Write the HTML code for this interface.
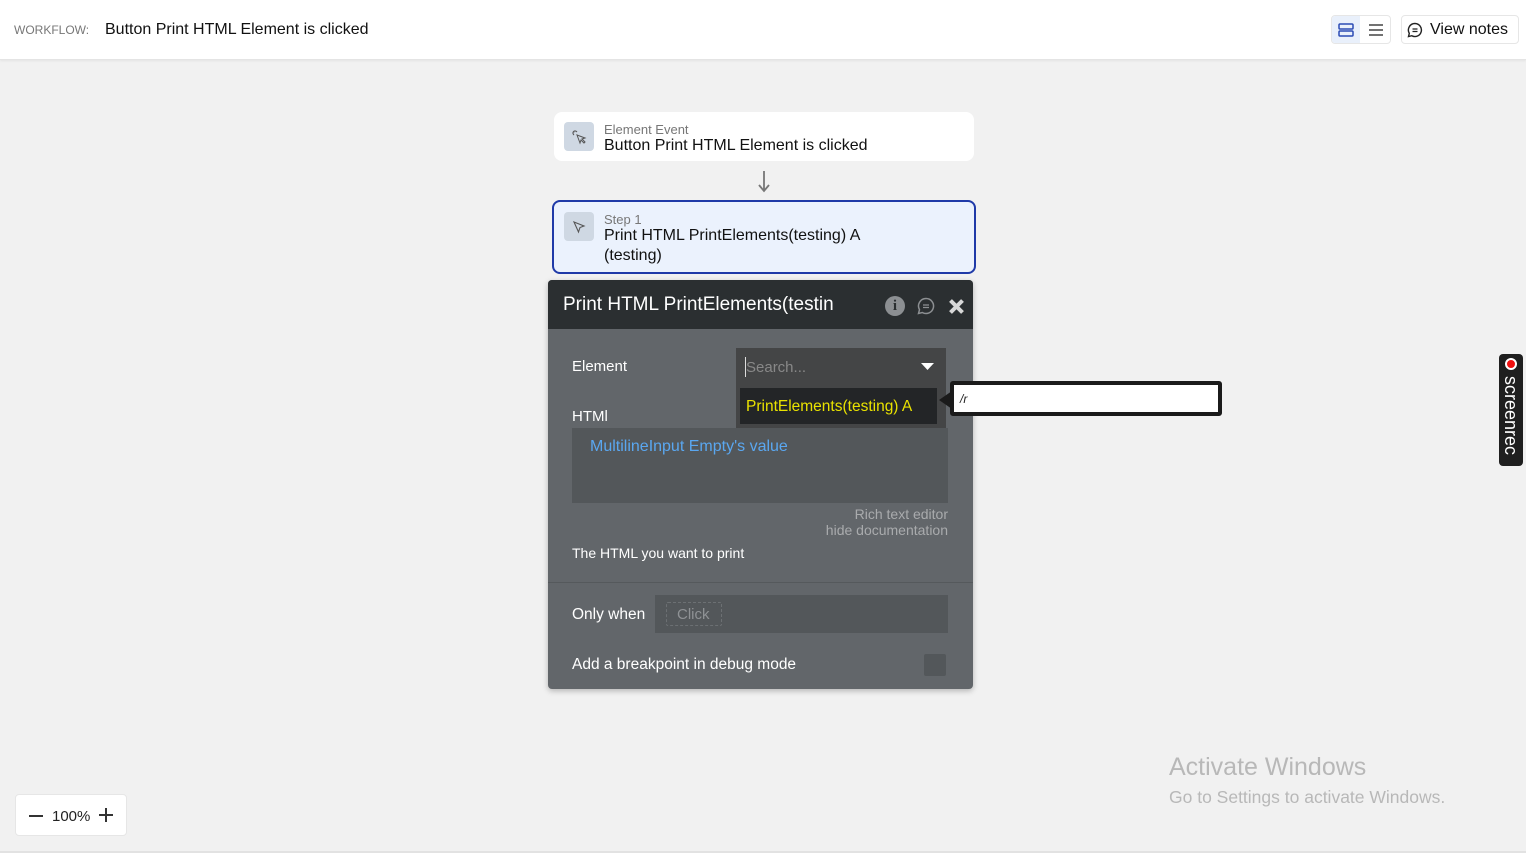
<!DOCTYPE html>
<html><head><meta charset="utf-8"><style>
*{box-sizing:border-box;margin:0;padding:0}
body{width:1526px;height:853px;background:#f1f1f1;font-family:"Liberation Sans",sans-serif;position:relative;overflow:hidden;color:#1a1a1a}
.a{position:absolute}
</style></head><body>
<div class="a" style="left:0;top:0;width:1526px;height:60px;background:#fff;border-bottom:1px solid #e4e4e4;box-shadow:0 1px 2px rgba(0,0,0,.06)"></div>
<div class="a" style="left:14px;top:23px;font-size:12px;color:#777">WORKFLOW:</div>
<div class="a" style="left:105px;top:21px;font-size:16px;color:#111">Button Print HTML Element is clicked</div>
<div class="a" style="left:1331px;top:15px;width:60px;height:29px;border:1px solid #e6e6e6;border-radius:4px;background:#fff"></div>
<div class="a" style="left:1332px;top:16px;width:28px;height:27px;background:#e9f0fb;border-radius:3px 0 0 3px"></div>
<svg class="a" style="left:1338px;top:22px" width="16" height="16" viewBox="0 0 16 16"><rect x="1" y="2" width="14" height="5" rx="1" fill="none" stroke="#2b4bb5" stroke-width="1.5"/><rect x="1" y="9" width="14" height="5" rx="1" fill="none" stroke="#2b4bb5" stroke-width="1.5"/></svg>
<svg class="a" style="left:1368px;top:22px" width="16" height="16" viewBox="0 0 16 16"><path d="M1 3h14M1 8h14M1 13h14" stroke="#444" stroke-width="1.5"/></svg>
<div class="a" style="left:1401px;top:15px;width:118px;height:29px;border:1px solid #e6e6e6;border-radius:4px;background:#fff"></div>
<svg class="a" style="left:1407px;top:22px" width="16" height="16" viewBox="0 0 16 16"><path d="M8 1.5a6.5 6.5 0 1 1-3.2 12.2L1.5 14.5l.8-3.2A6.5 6.5 0 0 1 8 1.5z" fill="none" stroke="#222" stroke-width="1.4"/><path d="M5.5 7h5M5.5 9.5h5" stroke="#222" stroke-width="1.2"/></svg>
<div class="a" style="left:1430px;top:21px;font-size:16px;color:#111">View notes</div>

<div class="a" style="left:554px;top:112px;width:420px;height:49px;background:#fff;border-radius:8px"></div>
<div class="a" style="left:564px;top:122px;width:30px;height:29px;background:#cfd8e3;border-radius:4px"></div>
<svg class="a" style="left:571px;top:129px" width="16" height="16" viewBox="0 0 16 16"><path d="M6 6l8 3-3 1 3 3-1 1-3-3-1 3z" fill="none" stroke="#555" stroke-width="1"/><path d="M4 1v2M1 4h2M2 2l1.3 1.3M6 2L5 3M2 6l1-1" stroke="#555" stroke-width="1"/></svg>
<div class="a" style="left:604px;top:122px;font-size:13px;color:#777">Element Event</div>
<div class="a" style="left:604px;top:137px;font-size:16px;color:#111">Button Print HTML Element is clicked</div>
<svg class="a" style="left:757px;top:171px" width="14" height="22" viewBox="0 0 14 22"><path d="M7 0v19M2 14l5 6 5-6" fill="none" stroke="#777" stroke-width="1.8"/></svg>

<div class="a" style="left:552px;top:200px;width:424px;height:74px;background:#ebf2fd;border:2px solid #1f3aa8;border-radius:8px"></div>
<div class="a" style="left:564px;top:212px;width:30px;height:29px;background:#cfd8e3;border-radius:4px"></div>
<svg class="a" style="left:571px;top:219px" width="16" height="16" viewBox="0 0 16 16"><path d="M3 3l10 4-4 1.5L7.5 13z" fill="none" stroke="#555" stroke-width="1.1"/></svg>
<div class="a" style="left:604px;top:212px;font-size:13px;color:#777">Step 1</div>
<div class="a" style="left:604px;top:226px;font-size:16px;color:#111;line-height:20px">Print HTML PrintElements(testing) A<br>(testing)</div>

<div class="a" style="left:548px;top:280px;width:425px;height:409px;background:#62666a;border-radius:4px;box-shadow:0 2px 6px rgba(0,0,0,.25);overflow:hidden">
<div style="height:49px;background:#2b2f31"></div>
</div>
<div class="a" style="left:563px;top:294px;font-size:19px;color:#fff">Print HTML PrintElements(testin</div>
<div class="a" style="left:885px;top:296px;width:20px;height:20px;border-radius:50%;background:#8c8f92;color:#2b2f31;font:bold 15px/20px 'Liberation Serif',serif;text-align:center">i</div>
<svg class="a" style="left:917px;top:297px" width="18" height="18" viewBox="0 0 18 18"><path d="M9 1.5a7.5 7.5 0 1 1-3.7 14L1.5 16.5l1-3.8A7.5 7.5 0 0 1 9 1.5z" fill="none" stroke="#8c8f92" stroke-width="1.5"/><path d="M6 8h6M6 10.5h6" stroke="#8c8f92" stroke-width="1.3"/></svg>
<svg class="a" style="left:948px;top:298px" width="17" height="17" viewBox="0 0 17 17"><path d="M2.5 2.5l12 12M14.5 2.5l-12 12" stroke="#d8d8d8" stroke-width="4"/></svg>

<div class="a" style="left:572px;top:358px;font-size:15px;color:#fff">Element</div>
<div class="a" style="left:572px;top:408px;font-size:15px;color:#fff">HTMl</div>
<div class="a" style="left:572px;top:428px;width:376px;height:75px;background:#53575a"></div>
<div class="a" style="left:590px;top:438px;font-size:16px;color:#5aa7f0">MultilineInput Empty's value</div>
<div class="a" style="left:736px;top:348px;width:210px;height:80px;background:#444546"></div>
<div class="a" style="left:745px;top:357px;width:1px;height:20px;background:#ddd"></div>
<div class="a" style="left:746px;top:359px;font-size:15px;color:#888">Search...</div>
<svg class="a" style="left:921px;top:363px" width="13" height="8" viewBox="0 0 13 8"><path d="M0 0h13L6.5 7z" fill="#fff"/></svg>
<div class="a" style="left:740px;top:388px;width:197px;height:36px;background:#232527"></div>
<div class="a" style="left:746px;top:398px;font-size:15.5px;color:#e9e200">PrintElements(testing) A</div>
<div class="a" style="left:950px;top:381px;width:272px;height:35px;background:#fff;border:4px solid #1b1b1b;border-radius:3px"></div>
<svg class="a" style="left:939px;top:391px" width="13" height="18" viewBox="0 0 13 18"><path d="M13 0L0 9l13 9z" fill="#1b1b1b"/></svg>
<div class="a" style="left:960px;top:392px;font-size:12px;color:#222;font-style:italic">/r</div>
<div class="a" style="left:700px;top:506px;width:248px;text-align:right;font-size:14px;color:#a9abad;line-height:16px">Rich text editor<br>hide documentation</div>
<div class="a" style="left:572px;top:545px;font-size:14px;color:#fff">The HTML you want to print</div>
<div class="a" style="left:548px;top:582px;width:425px;height:1px;background:#55595c"></div>
<div class="a" style="left:572px;top:606px;font-size:15.5px;color:#fff">Only when</div>
<div class="a" style="left:655px;top:595px;width:293px;height:38px;background:#53575a"></div>
<div class="a" style="left:666px;top:602px;width:56px;height:24px;border:1px dashed #6c7073;border-radius:2px"></div>
<div class="a" style="left:677px;top:606px;font-size:15px;color:#8f9295">Click</div>
<div class="a" style="left:572px;top:656px;font-size:15.5px;color:#fff">Add a breakpoint in debug mode</div>
<div class="a" style="left:924px;top:654px;width:22px;height:22px;background:#53575a;border-radius:2px"></div>

<div class="a" style="left:1499px;top:354px;width:24px;height:112px;background:#1f1f1f;border-radius:4px"></div>
<div class="a" style="left:1505px;top:358px;width:12px;height:12px;border-radius:50%;background:#f01010;border:2px solid #fff"></div>
<div class="a" style="left:1502px;top:376px;writing-mode:vertical-rl;font-size:18px;color:#fff;line-height:18px">screenrec</div>

<div class="a" style="left:1169px;top:753px;font-size:25px;color:#b8b8b8">Activate Windows</div>
<div class="a" style="left:1169px;top:787px;font-size:17.5px;color:#b8b8b8">Go to Settings to activate Windows.</div>

<div class="a" style="left:15px;top:794px;width:112px;height:42px;background:#fff;border:1px solid #e6e6e6;border-radius:4px"></div>
<div class="a" style="left:29px;top:815px;width:14px;height:1.5px;background:#333"></div>
<div class="a" style="left:52px;top:808px;font-size:15px;color:#222">100%</div>
<div class="a" style="left:99px;top:808px;width:14px;height:14px"><div class="a" style="left:0;top:6px;width:14px;height:1.5px;background:#333"></div><div class="a" style="left:6px;top:0;width:1.5px;height:14px;background:#333"></div></div>
<div class="a" style="left:0;top:851px;width:1526px;height:2px;background:#e2e2e2"></div>
</body></html>
